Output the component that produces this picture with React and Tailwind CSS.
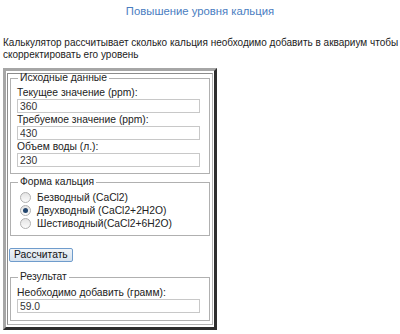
export default function App() {
  const radios = [
    { label: "Безводный (CaCl2)", checked: false },
    { label: "Двухводный (CaCl2+2H2O)", checked: true },
    { label: "Шестиводный(CaCl2+6H2O)", checked: false },
  ];

  return (
    <div className="w-[400px] h-[334px] bg-white overflow-hidden text-[10.3px] text-[#222] font-['Liberation_Sans',Arial,sans-serif]">
      <h1 className="text-center text-[11.3px] leading-[16px] pt-[3px] text-[#4a7dbf] font-normal">
        Повышение уровня кальция
      </h1>

      <p className="mt-[18px] pl-[3px] text-[10px] leading-[12px] whitespace-nowrap">
        Калькулятор рассчитывает сколько кальция необходимо добавить в аквариум чтобы
        <br />
        скорректировать его уровень
      </p>

      <div className="mt-[7px] ml-[3px] w-[214px] border-[3px] border-t-[#a6a6a6] border-l-[#a6a6a6] border-r-[#2e2e2e] border-b-[#2e2e2e] pt-[2px] px-[1px] pb-[2px]">
        <div className="border border-t-[#8c8c8c] border-l-[#8c8c8c] border-r-[#b4b4b4] border-b-[#b4b4b4] px-[2px] pb-[3px]">
          <fieldset className="border border-[#b0b0b0] pl-[6px] pt-[4px] pb-[6px]">
            <legend className="ml-[1px] px-[2px] leading-[8px]">Исходные данные</legend>
            <div className="leading-[13px]">Текущее значение (ppm):</div>
            <input readOnly value="360" className="block h-[14px] w-[183px] border border-[#c8c8c8] px-[2px] text-[10.3px] text-[#333] leading-[12px]" />
            <div className="leading-[13px]">Требуемое значение (ppm):</div>
            <input readOnly value="430" className="block h-[14px] w-[183px] border border-[#c8c8c8] px-[2px] text-[10.3px] text-[#333] leading-[12px]" />
            <div className="leading-[13px]">Объем воды (л.):</div>
            <input readOnly value="230" className="block h-[14px] w-[183px] border border-[#c8c8c8] px-[2px] text-[10.3px] text-[#333] leading-[12px]" />
          </fieldset>

          <fieldset className="mt-[4px] border border-[#b0b0b0] pl-[6px] pt-[5px] pb-[5px]">
            <legend className="ml-[1px] px-[2px] leading-[8px]">Форма кальция</legend>
            {radios.map((r) => (
              <div key={r.label} className="flex items-center h-[13px]">
                <span className="ml-[3px] mr-[6px] w-[11px] h-[11px] rounded-full border border-[#b0b0b0] bg-gradient-to-b from-[#e4e4e4] to-[#fbfbfb] flex items-center justify-center">
                  {r.checked && <span className="w-[5px] h-[5px] rounded-full bg-[#23466e]" />}
                </span>
                <span className="leading-[13px]">{r.label}</span>
              </div>
            ))}
          </fieldset>

          <button className="mt-[12px] -ml-[1px] h-[14px] px-[4px] rounded-[2px] border border-[#6f9ccc] bg-gradient-to-b from-[#f0f4f8] to-[#d6e2ee] text-[10.3px] leading-[12px] text-[#111]">
            Рассчитать
          </button>

          <fieldset className="mt-[11px] border border-[#b0b0b0] pl-[6px] pt-[5px] pb-[7px]">
            <legend className="ml-[1px] px-[2px] leading-[8px]">Результат</legend>
            <div className="leading-[13px]">Необходимо добавить (грамм):</div>
            <input readOnly value="59.0" className="block h-[14px] w-[183px] border border-[#c8c8c8] px-[2px] text-[10.3px] text-[#333] leading-[12px]" />
          </fieldset>
        </div>
      </div>
    </div>
  );
}
